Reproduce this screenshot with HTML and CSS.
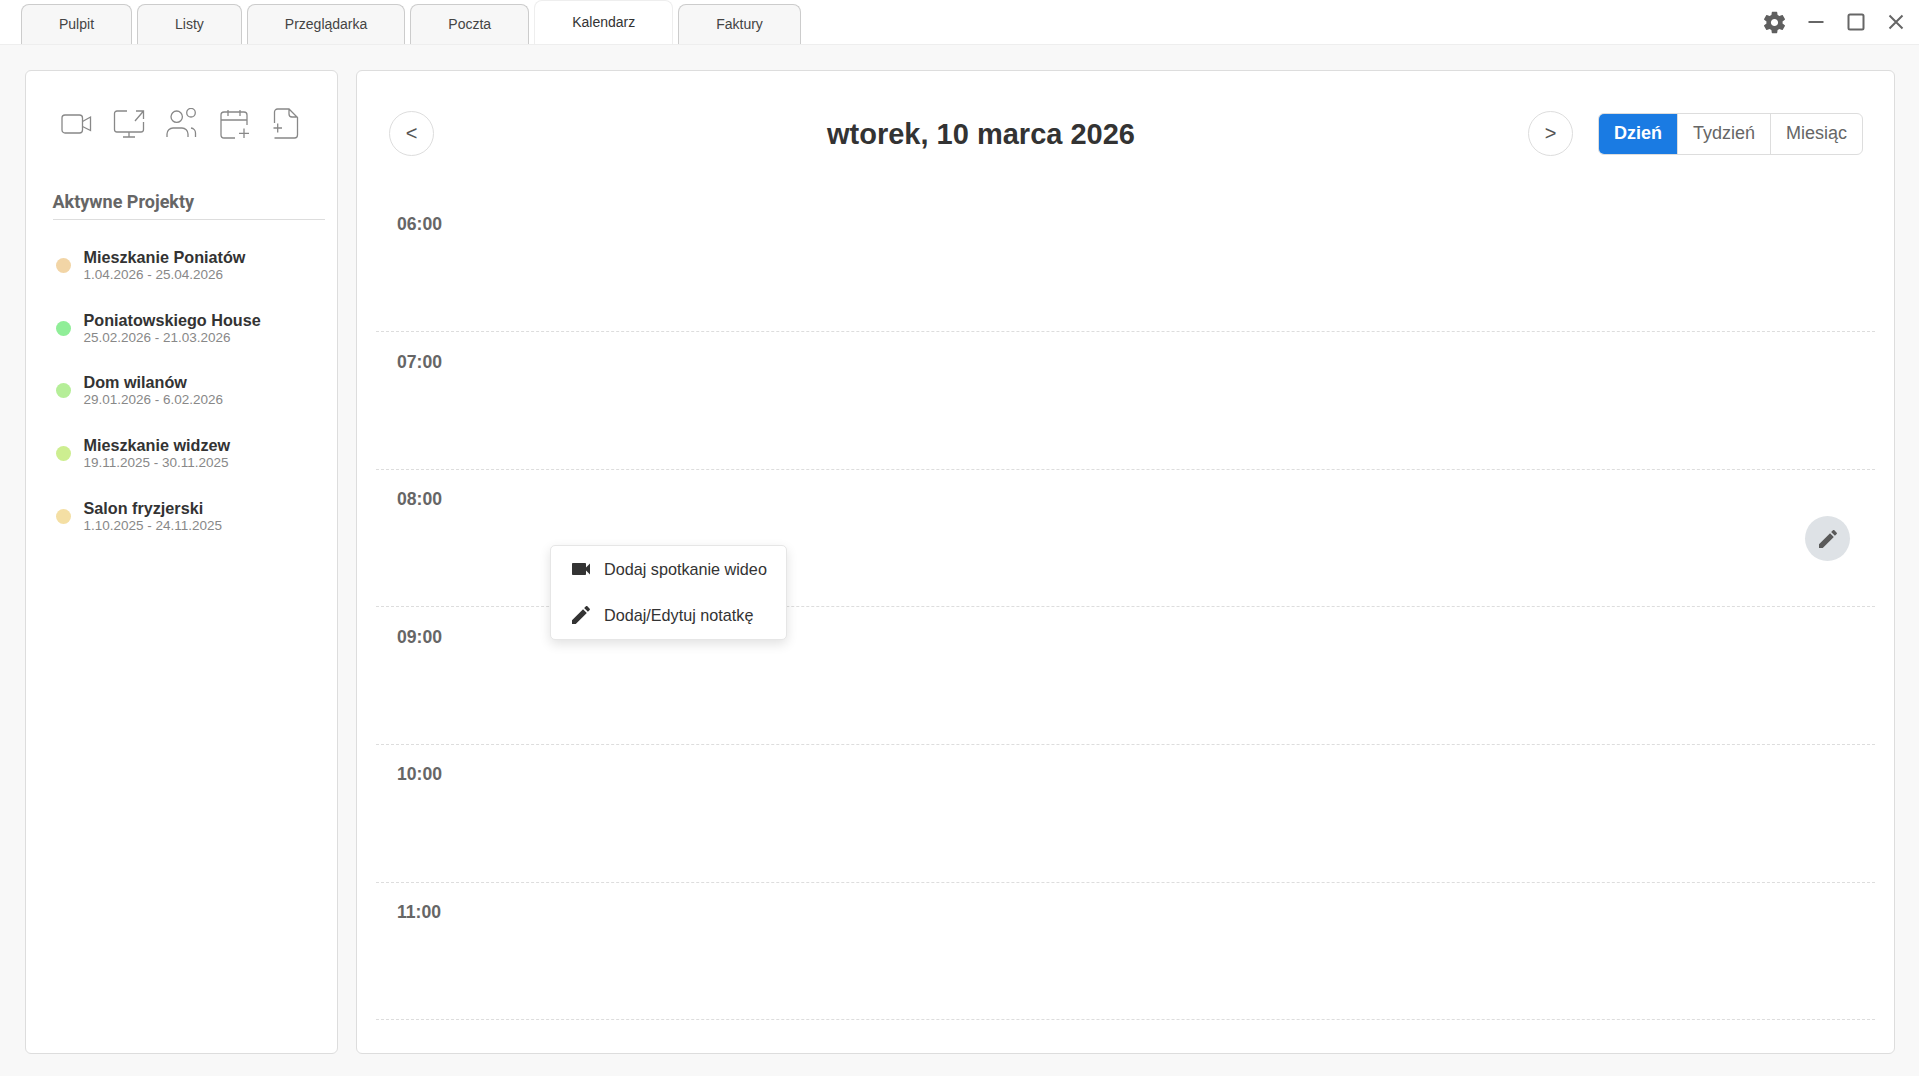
FILE: index.html
```html
<!DOCTYPE html>
<html lang="pl">
<head>
    <meta charset="UTF-8">
    <meta name="viewport" content="width=device-width, initial-scale=1.0">
    <title>Kalendarz</title>
    <link rel="stylesheet" href="styles.css">
</head>
<body>
    <header class="topbar">
        <nav class="tabs">
            <div class="tab">Pulpit</div>
            <div class="tab">Listy</div>
            <div class="tab">Przeglądarka</div>
            <div class="tab">Poczta</div>
            <div class="tab active">Kalendarz</div>
            <div class="tab">Faktury</div>
        </nav>
        <div class="window-controls">
            <svg class="gear" viewBox="0 0 24 24"><path d="M19.14 12.94c.04-.3.06-.61.06-.94 0-.32-.02-.64-.07-.94l2.03-1.58c.18-.14.23-.41.12-.61l-1.92-3.32c-.12-.22-.37-.29-.59-.22l-2.39.96c-.5-.38-1.03-.7-1.62-.94l-.36-2.54c-.04-.24-.24-.41-.48-.41h-3.84c-.24 0-.43.17-.47.41l-.36 2.54c-.59.24-1.13.57-1.62.94l-2.39-.96c-.22-.08-.47 0-.59.22L2.74 8.87c-.12.21-.08.47.12.61l2.03 1.58c-.05.3-.09.63-.09.94s.02.64.07.94l-2.03 1.58c-.18.14-.23.41-.12.61l1.92 3.32c.12.22.37.29.59.22l2.39-.96c.5.38 1.03.7 1.62.94l.36 2.54c.05.24.24.41.48.41h3.84c.24 0 .44-.17.47-.41l.36-2.54c.59-.24 1.13-.56 1.62-.94l2.39.96c.22.08.47 0 .59-.22l1.92-3.32c.12-.22.07-.47-.12-.61l-2.01-1.58zM12 15.2c-1.76 0-3.2-1.44-3.2-3.2s1.44-3.2 3.2-3.2 3.2 1.44 3.2 3.2-1.44 3.2-3.2 3.2z"/></svg>
            <svg class="win-icon" viewBox="0 0 20 20"><path d="M2.5 10H17.5"/></svg>
            <svg class="win-icon" viewBox="0 0 20 20"><rect x="2.5" y="2.5" width="15" height="15" rx="1.5"/></svg>
            <svg class="win-icon" viewBox="0 0 20 20"><path d="M3.5 3.5L16.5 16.5M16.5 3.5L3.5 16.5"/></svg>
        </div>
    </header>

    <div class="content">
        <aside class="panel sidebar">
            <div class="tools">
                <svg class="tool" viewBox="0 0 32 32"><rect x="2" y="7" width="20.500" height="18" rx="3"/><path d="M22.500 13.500L30.500 9V22.500L22.500 18.500"/></svg>
                <svg class="tool" viewBox="0 0 32 32"><path d="M14 3H4a2.500 2.500 0 0 0-2.500 2.500V21.500A2.500 2.500 0 0 0 4 24H28a2.500 2.500 0 0 0 2.500-2.500V14M16 24V29M10 29H22M22 13L30.500 3M23 3H30.500V11"/></svg>
                <svg class="tool" viewBox="0 0 32 32"><circle cx="11.700" cy="8.700" r="5.700"/><circle cx="26" cy="4.700" r="4.300"/><path d="M2 29V26a6 6 0 0 1 6-6H17a6 6 0 0 1 6 6V29M26 20a5 5 0 0 1 4.500 5V29"/></svg>
                <svg class="tool" viewBox="0 0 32 32"><path d="M17 30H6a3 3 0 0 1-3-3V7a3 3 0 0 1 3-3H26a3 3 0 0 1 3 3V17M3 12H29M10 2V8M22 2V8M26 20.500V30M21 25.300H31"/></svg>
                <svg class="tool" viewBox="0 0 32 32"><path d="M4.500 15V4a3 3 0 0 1 3-3H19L27.500 9.500V27a3 3 0 0 1-3 3H4.500M19 1.500V6a3 3 0 0 0 3 3H27.500M3.500 20H12M7.700 15.500V24.500"/></svg>
            </div>
            <h3 class="side-title">Aktywne Projekty</h3>
            <ul class="projects">
                <li class="project">
                    <span class="dot dot-orange"></span>
                    <div>
                        <div class="project-name">Mieszkanie Poniatów</div>
                        <div class="project-date">1.04.2026 - 25.04.2026</div>
                    </div>
                </li>
                <li class="project">
                    <span class="dot dot-green"></span>
                    <div>
                        <div class="project-name">Poniatowskiego House</div>
                        <div class="project-date">25.02.2026 - 21.03.2026</div>
                    </div>
                </li>
                <li class="project">
                    <span class="dot dot-light-green"></span>
                    <div>
                        <div class="project-name">Dom wilanów</div>
                        <div class="project-date">29.01.2026 - 6.02.2026</div>
                    </div>
                </li>
                <li class="project">
                    <span class="dot dot-lime"></span>
                    <div>
                        <div class="project-name">Mieszkanie widzew</div>
                        <div class="project-date">19.11.2025 - 30.11.2025</div>
                    </div>
                </li>
                <li class="project">
                    <span class="dot dot-yellow"></span>
                    <div>
                        <div class="project-name">Salon fryzjerski</div>
                        <div class="project-date">1.10.2025 - 24.11.2025</div>
                    </div>
                </li>
            </ul>
        </aside>

        <main class="panel calendar">
            <div class="cal-header">
                <button class="nav-btn">&lt;</button>
                <h1 class="cal-title">wtorek, 10 marca 2026</h1>
                <button class="nav-btn">&gt;</button>
                <div class="views">
                    <div class="view view-day selected">Dzień</div>
                    <div class="view view-week">Tydzień</div>
                    <div class="view view-month">Miesiąc</div>
                </div>
            </div>
            <div class="hours">
                <div class="hour">06:00</div>
                <div class="hour">07:00</div>
                <div class="hour">08:00</div>
                <div class="hour">09:00</div>
                <div class="hour">10:00</div>
                <div class="hour">11:00</div>
            </div>

            <button class="note-btn">
                <svg class="note-icon" viewBox="0 0 24 24"><path d="M3 17.250V21h3.750L17.810 9.940l-3.750-3.750L3 17.250zM20.710 7.040c.39-.39.39-1.020 0-1.410l-2.340-2.340c-.39-.39-1.020-.39-1.410 0l-1.830 1.830 3.750 3.750 1.830-1.830z"/></svg>
            </button>

            <div class="context-menu">
                <div class="menu-item">
                    <svg class="menu-icon" viewBox="0 0 24 24"><path d="M17 10.500V7c0-.55-.45-1-1-1H4c-.55 0-1 .45-1 1v10c0 .55.45 1 1 1h12c.55 0 1-.45 1-1v-3.500l4 4v-11l-4 4z"/></svg>
                    Dodaj spotkanie wideo
                </div>
                <div class="menu-item">
                    <svg class="menu-icon" viewBox="0 0 24 24"><path d="M3 17.250V21h3.750L17.810 9.940l-3.750-3.750L3 17.250zM20.710 7.040c.39-.39.39-1.020 0-1.410l-2.340-2.340c-.39-.39-1.020-.39-1.410 0l-1.830 1.830 3.750 3.750 1.830-1.830z"/></svg>
                    Dodaj/Edytuj notatkę
                </div>
            </div>
        </main>
    </div>
</body>
</html>
```

FILE: styles.css
```css
* { box-sizing: border-box; }
html, body { height: 100%; }
body { margin: 0; background: #f8f8f8; font-family: "Liberation Sans", Arial, sans-serif; color: #333; overflow: hidden; }

.topbar { display: flex; justify-content: space-between; height: 45px; background: #fff; border-bottom: 1px solid #eee; padding-left: 21px; }
.tabs { display: flex; align-items: flex-end; gap: 5px; }
.tab { height: 40px; padding: 11px 37px 0; background: #f7f7f7; border: 1px solid #ccc; border-bottom: none; border-radius: 8px 8px 0 0; font-size: 14px; line-height: 16px; color: #444; }
.tab.active { height: 44px; padding-top: 13px; background: #fff; border-color: #eee; color: #333; }

.window-controls { display: flex; align-items: center; padding-right: 13px; }
.gear { width: 27px; height: 27px; fill: #5f5f5f; margin-right: -2px; }
.win-icon { width: 20px; height: 20px; fill: none; stroke: #666; stroke-width: 2; margin-left: 20px; }

.content { display: flex; gap: 18px; height: 1031px; padding: 25px 24px 22px 25px; }
.panel { background: #fff; border: 1px solid #ddd; border-radius: 6px; }

.sidebar { width: 313px; flex: none; padding: 37px 12px 0 26.5px; }
.tools { display: flex; gap: 20.5px; margin-left: 7.5px; }
.tool { width: 32px; height: 32px; fill: none; stroke: #888; stroke-width: 1.3; }
.side-title { margin: 51px 0 0; padding-bottom: 7px; border-bottom: 1px solid #ddd; font-family: Roboto, sans-serif; font-size: 18px; line-height: 21px; font-weight: 700; color: #666; }
.projects { list-style: none; margin: 14px 0 0; padding: 0; }
.project { display: flex; align-items: center; height: 62.7px; padding-left: 3px; gap: 13px; }
.dot { width: 15px; height: 15px; border-radius: 50%; flex: none; }
.dot-orange { background: #f2d5a6; }
.dot-green { background: #90ee98; }
.dot-light-green { background: #b5ee98; }
.dot-lime { background: #cdee90; }
.dot-yellow { background: #f4dfa4; }
.project-name { font-size: 16.2px; line-height: 18px; font-weight: 700; color: #333; }
.project-date { font-size: 13.5px; line-height: 17px; color: #888; }

.calendar { flex: 1; position: relative; padding: 40px 19px 0; }
.cal-header { display: flex; align-items: center; padding: 0 12px 0 13px; height: 45px; }
.nav-btn { width: 45px; height: 45px; flex: none; padding: 0; background: #fff; border: 1px solid #ddd; border-radius: 50%; font-family: inherit; font-size: 20px; color: #555; }
.cal-title { flex: 1; margin: 0; padding-top: 1px; text-align: center; font-size: 29px; font-weight: 700; color: #333; }
.views { display: flex; height: 42px; margin-left: 25px; border: 1px solid #ddd; border-radius: 6px; overflow: hidden; }
.view { display: flex; align-items: center; justify-content: center; font-size: 18px; color: #666; border-left: 1px solid #ddd; }
.view-day { width: 78px; border-left: none; }
.view-week { width: 93px; }
.view-month { width: 92px; }
.view.selected { background: #1a7be3; color: #fff; font-weight: 700; }

.hours { margin-top: 38.6px; }
.hour { height: 137.6px; padding: 19.5px 0 0 21px; border-bottom: 1px dashed #ddd; font-size: 17.6px; line-height: 20px; font-weight: 700; color: #666; }

.note-btn { position: absolute; left: 1448px; top: 445px; width: 45px; height: 45px; padding: 0; display: flex; align-items: center; justify-content: center; background: #dee2e6; border: none; border-radius: 50%; }
.note-icon { width: 24px; height: 24px; fill: #5a5a5a; }

.context-menu { position: absolute; left: 193px; top: 474px; width: 237px; height: 95px; background: #fff; border: 1px solid #e6e6e6; border-radius: 5px; box-shadow: 0 4px 12px rgba(0,0,0,0.12); }
.menu-item { display: flex; align-items: center; height: 46px; padding-left: 18px; gap: 11px; font-size: 16.2px; color: #333; }
.menu-icon { width: 24px; height: 24px; fill: #333; flex: none; }
```
